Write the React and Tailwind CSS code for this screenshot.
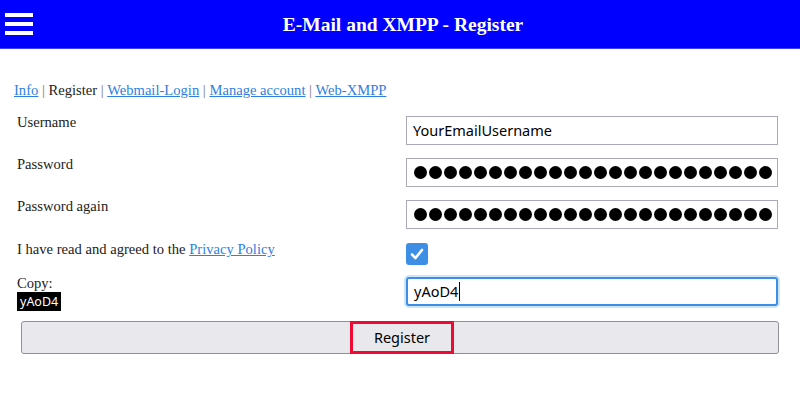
import React from 'react';

const serif = "font-['Liberation_Serif',serif]";
const sans = "font-['Noto_Sans',sans-serif]";

function Row({ label, children, className = '' }) {
  return (
    <div className={`flex items-start ${className}`}>
      <div className="w-[406px] shrink-0 pl-[17px] leading-[16px] -mt-[2px]">{label}</div>
      <div className="flex-1">{children}</div>
    </div>
  );
}

function TextBox({ value, focused }) {
  return (
    <div
      className={`w-[372px] h-[29px] flex items-center px-[6px] bg-white text-black text-[14.5px] ${sans} ${
        focused
          ? 'border-2 border-[#3d8fe6] rounded-[3px] shadow-[0_0_0_2px_#cfe5fb]'
          : 'border border-[#a9a9b8]'
      }`}
    >
      {value}
      {focused && <span className="w-px h-[19px] bg-black ml-px" />}
    </div>
  );
}

function Dots() {
  return (
    <div className="flex gap-[2px] pl-px">
      {Array.from({ length: 24 }).map((_, i) => (
        <span key={i} className="block w-[13px] h-[13px] rounded-full bg-black" />
      ))}
    </div>
  );
}

export default function App() {
  return (
    <div className={`w-[800px] h-[398px] bg-white text-[#222] ${serif}`}>
      {/* Top bar */}
      <header className="h-[49px] bg-[#0000ff] border-b border-[#3f3fff] flex items-center relative">
        <div className="absolute left-[5px] top-[13px] flex flex-col gap-[5px]">
          <span className="block w-[28px] h-[4px] bg-white" />
          <span className="block w-[28px] h-[4px] bg-white" />
          <span className="block w-[28px] h-[4px] bg-white" />
        </div>
        <h1 className="w-full text-center text-white text-[19.5px] font-bold pl-[6px] pt-[2px]">
          E-Mail and XMPP - Register
        </h1>
      </header>

      {/* Nav */}
      <nav className="pl-[14px] pt-[30px] text-[14.6px] leading-[22px] text-[#222]">
        <a className="text-[#2f7fe0] underline">Info</a>
        <span className="text-[#777]"> | </span>Register<span className="text-[#777]"> | </span>
        <a className="text-[#2f7fe0] underline">Webmail-Login</a>
        <span className="text-[#777]"> | </span>
        <a className="text-[#2f7fe0] underline">Manage account</a>
        <span className="text-[#777]"> | </span>
        <a className="text-[#2f7fe0] underline">Web-XMPP</a>
      </nav>

      {/* Form */}
      <div className="mt-[15px] flex flex-col gap-[13px] text-[14.6px]">
        <Row label="Username">
          <TextBox value="YourEmailUsername" />
        </Row>
        <Row label="Password">
          <TextBox value={<Dots />} />
        </Row>
        <Row label="Password again">
          <TextBox value={<Dots />} />
        </Row>
        <Row
          className="pt-px"
          label={
            <span>
              I have read and agreed to the <a className="text-[#2f7fe0] underline">Privacy Policy</a>
            </span>
          }
        >
          <div className="w-[22px] h-[22px] rounded-[3px] bg-[#3d8fe6] flex items-center justify-center">
            <svg width="14" height="12" viewBox="0 0 14 12">
              <path d="M2 6.5 L5.5 10 L12 2" fill="none" stroke="white" strokeWidth="2.6" strokeLinecap="round" strokeLinejoin="round" />
            </svg>
          </div>
        </Row>
        <Row
          className="-mt-px"
          label={
            <div className="flex flex-col items-start">
              <span>Copy:</span>
              <span className={`mt-[1px] bg-black text-white text-[12.5px] px-[3px] leading-[19px] ${sans}`}>yAoD4</span>
            </div>
          }
        >
          <TextBox value="yAoD4" focused />
        </Row>
      </div>

      {/* Submit */}
      <div className="mt-[10px] px-[21px]">
        <div className="w-[758px] h-[33px] bg-[#e9e9ed] border border-[#8f8f9d] rounded-[3px] flex items-center justify-center">
          <span className={`h-[33px] px-[21px] ml-[4px] border-[3px] border-[#ee0a33] flex items-center text-[14.5px] text-black ${sans}`}>
            Register
          </span>
        </div>
      </div>
    </div>
  );
}
